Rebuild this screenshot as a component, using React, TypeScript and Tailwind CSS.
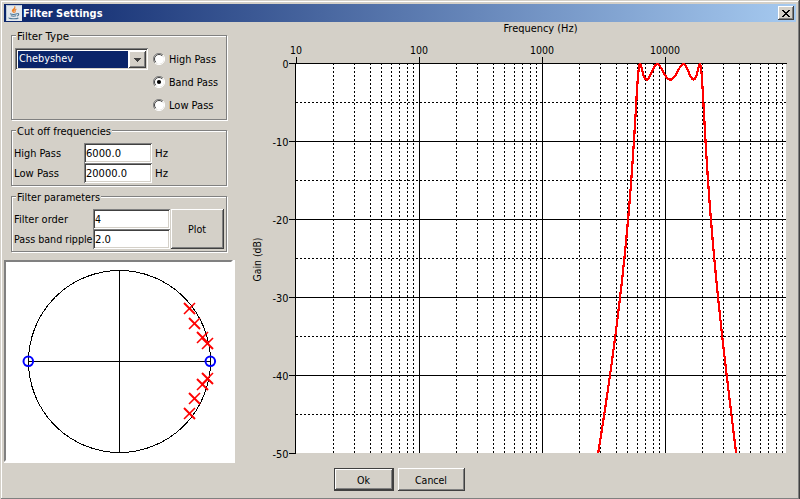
import React from "react";

const ETCHED =
  "relative w-[216px] border border-[#808080] shadow-[1px_1px_0_#fff,inset_1px_1px_0_#fff]";
const SUNKEN =
  "bg-white shadow-[inset_1px_1px_0_#808080,inset_-1px_-1px_0_#fff,inset_2px_2px_0_#404040,inset_-2px_-2px_0_#d4d0c8]";
const RAISED =
  "bg-[#d4d0c8] shadow-[inset_-1px_-1px_0_#404040,inset_1px_1px_0_#fff,inset_-2px_-2px_0_#808080]";

function Group({ title, titleWidth, className, children }: { title: string; titleWidth: number; className: string; children: React.ReactNode }) {
  return (
    <section className={`${ETCHED} ${className}`}>
      <h2
        className="absolute -top-[7px] left-[4px] h-[13px] bg-[#d4d0c8] pl-px leading-[13px]"
        style={{ width: titleWidth }}
      >
        <Label text={title} width={titleWidth - 2} />
      </h2>
      {children}
    </section>
  );
}

function Label({ text, width, bold = false, color = "#000" }: { text: string; width: number; bold?: boolean; color?: string }) {
  return (
    <svg width={width + 1} height="14" className="block shrink-0 overflow-visible">
      <text
        x="0"
        y={bold ? 11 : 10.5}
        fill={color}
        fontSize={11}
        fontFamily={bold ? "DejaVu Sans" : undefined}
        fontWeight={bold ? 700 : 400}
        textLength={width}
        lengthAdjust="spacingAndGlyphs"
      >
        {text}
      </text>
    </svg>
  );
}

function Radio({ label, width, checked = false }: { label: string; width: number; checked?: boolean }) {
  return (
    <label className="flex h-[23px] items-center gap-[4px]">
      <svg width="12" height="12" viewBox="0 0 12 12">
        <circle cx="6" cy="6" r="5" fill="#fff" />
        <path d="M2 10A5.5 5.5 0 0 1 10 2" fill="none" stroke="#808080" />
        <path d="M2.8 9.2A4.5 4.5 0 0 1 9.2 2.8" fill="none" stroke="#404040" />
        <path d="M10 2A5.5 5.5 0 0 1 2 10" fill="none" stroke="#fff" />
        {checked && <circle cx="6" cy="6" r="2.1" fill="#000" />}
      </svg>
      <Label text={label} width={width} />
    </label>
  );
}

function Field({ value, width, className }: { value: string; width: number; className: string }) {
  return (
    <div className={`flex h-[20px] items-center pl-[2px] ${SUNKEN} ${className}`}>
      <Label text={value} width={width} />
    </div>
  );
}

const MINOR = [37, 58, 74, 85, 95, 103, 111, 117];
const DECADES = [296, 419, 542, 665];

/* Fourth order Chebyshev band pass, 6 kHz to 20 kHz at a 192 kHz sample rate. */
function responsePoints() {
  const warp = (f: number) => Math.tan((Math.PI * f) / 192000);
  const lo = warp(6000);
  const hi = warp(20000);
  const pts: string[] = [];
  for (let x = 597; x <= 740; x += 0.5) {
    const w = warp(1000 * Math.pow(10, (x - 542) / 123));
    const u = (w * w - lo * hi) / ((hi - lo) * w);
    const t = 8 * u ** 4 - 8 * u ** 2 + 1;
    const gain = -10 * Math.log10(1 + (Math.pow(10, 0.2) - 1) * t * t);
    pts.push(`${x},${(64 - gain * 7.8).toFixed(2)}`);
  }
  return pts.join(" ");
}

function Chart() {
  return (
    <svg width="555" height="440" viewBox="240 22 555 440" className="block">
      <defs>
        <clipPath id="plot">
          <rect x="295" y="63" width="491" height="390" />
        </clipPath>
      </defs>
      <rect x="295" y="63" width="491" height="390" fill="#fff" />
      <g stroke="#000" strokeWidth="1" shapeRendering="crispEdges">
        {DECADES.map((d) =>
          MINOR.map((m) => (
            <line key={d + m} x1={d + m + 0.5} x2={d + m + 0.5} y1="64" y2="453" strokeDasharray="2 2" strokeDashoffset="1" />
          )),
        )}
        {[102, 180, 258, 336, 414].map((y) => (
          <line key={y} x1="296" x2="786" y1={y + 0.5} y2={y + 0.5} strokeDasharray="2 2" />
        ))}
        {[63, 141, 219, 297, 375].map((y) => (
          <line key={y} x1="289" x2={y === 63 ? 787 : 786} y1={y + 0.5} y2={y + 0.5} />
        ))}
        <line x1="289" x2="296" y1="453.5" y2="453.5" />
        <line x1="295.5" x2="295.5" y1="63" y2="454" />
        <line x1="296.5" x2="296.5" y1="57" y2="63" />
        {[419, 542, 665].map((x) => (
          <line key={x} x1={x + 0.5} x2={x + 0.5} y1="57" y2="453" />
        ))}
      </g>
      <polyline points={responsePoints()} fill="none" stroke="#f00" strokeWidth="2.2" clipPath="url(#plot)" shapeRendering="crispEdges" />
      <g fontSize="11" fill="#000">
        <text x="503.5" y="32" textLength="74" lengthAdjust="spacingAndGlyphs">Frequency (Hz)</text>
        <text x="290" y="54" textLength="12" lengthAdjust="spacingAndGlyphs">10</text>
        <text x="410" y="54" textLength="18" lengthAdjust="spacingAndGlyphs">100</text>
        <text x="530" y="54" textLength="24" lengthAdjust="spacingAndGlyphs">1000</text>
        <text x="650" y="54" textLength="30" lengthAdjust="spacingAndGlyphs">10000</text>
        <text x="282.5" y="68" textLength="6" lengthAdjust="spacingAndGlyphs">0</text>
        {[10, 20, 30, 40, 50].map((v) => (
          <text key={v} x="272.5" y={68 + v * 7.8} textLength="16" lengthAdjust="spacingAndGlyphs">{`-${v}`}</text>
        ))}
        <text transform="translate(261 281.5) rotate(-90)" textLength="44" lengthAdjust="spacingAndGlyphs">Gain (dB)</text>
      </g>
    </svg>
  );
}

const POLES = [
  [189, 308], [194, 323], [202, 337], [207, 343],
  [207, 378], [202, 384], [194, 398], [189, 413],
];

function PoleZeroPlot() {
  return (
    <svg width="231" height="203" viewBox="4 260 231 203" className="block bg-white">
      <path d="M4 260H233L231 262H6V460L4 462Z" fill="#808080" />
      <g fill="none" shapeRendering="crispEdges">
        <circle cx="119.5" cy="361.5" r="91" stroke="#000" />
        <path d="M119.5 271V452M28 361.5H211M28.5 359V364M210.5 359V364" stroke="#000" />
      </g>
      <g fill="none" stroke="#00f" strokeWidth="2">
        <circle cx="28.3" cy="361.3" r="4.8" />
        <circle cx="210.3" cy="361.3" r="4.8" />
      </g>
      <g fill="none" stroke="#f00">
        {POLES.map(([x, y]) => (
          <g key={`${x}-${y}`}>
            <path d={`M${x - 5} ${y - 5}l11 11`} strokeWidth="2" />
            <path d={`M${x - 5} ${y + 6}l11 -11`} strokeWidth="1.6" />
          </g>
        ))}
      </g>
    </svg>
  );
}

function JavaIcon() {
  return (
    <svg width="16" height="16" viewBox="0 0 16 16">
      <rect width="16" height="16" fill="#e4e8ed" />
      <path d="M.5 15.5V.5H15.5" fill="none" stroke="#b8c8d8" />
      <path d="M8.8 1.2C9.4 3.2 5.6 4 6.2 6.2L7.6 8C6.8 5.4 10.2 4.2 8.8 1.2ZM10.4 4C8.6 4.8 8.2 5.6 9 6.8L8.4 8C10.2 6.8 8.4 5.8 10.4 4Z" fill="#ee7a1a" stroke="#ee7a1a" strokeWidth=".5" />
      <path d="M4 8.8C6 9.6 9 9.5 11 8.8M4.8 10.8C6.6 11.4 8.6 11.3 10.2 10.8M11.2 8.6C13.4 8.2 13 10.5 11 11M3.2 12.6C1.8 13.8 11 14.4 12.4 12.8" fill="none" stroke="#4d7896" strokeWidth="1.1" />
    </svg>
  );
}

export default function App() {
  return (
    <div className="h-[499px] w-[800px] overflow-hidden text-black [font-family:'DejaVu_Sans_Condensed','DejaVu_Sans',sans-serif] text-[11px]">
      <div className="flex h-[500px] flex-col bg-[#d4d0c8] px-[4px] pt-[4px] shadow-[inset_-1px_-1px_0_#404040,inset_1px_1px_0_#d4d0c8,inset_-2px_-2px_0_#808080,inset_2px_2px_0_#fff]">
        <header className="flex h-[18px] shrink-0 items-center bg-linear-to-r/srgb from-[#0a246a] to-[#a6caf0] pr-[2px] pl-[2px]">
          <JavaIcon />
          <h1 className="ml-px">
            <Label text="Filter Settings" width={79.5} bold color="#fff" />
          </h1>
          <button className={`ml-auto flex h-[14px] w-[16px] items-center justify-center ${RAISED}`}>
            <svg width="8" height="7" viewBox="0 0 8 7" shapeRendering="crispEdges">
              <path d="M0 0h2v1h1v1h2V1h1V0h2v1H7v1H6v1H5v1h1v1h1v1h1v1H6V6H5V5H3v1H2v1H0V6h1V5h1V4h1V3H2V2H1V1H0Z" />
            </svg>
          </button>
        </header>

        <div className="flex">
          <aside className="w-[236px] shrink-0">
            <div className="flex flex-col pt-[13px] pl-[7px]">
              <Group title="Filter Type" titleWidth={54} className="flex h-[85px]">
                <div className={`mt-[12px] ml-[3px] flex h-[22px] w-[133px] p-[3px] pr-[2px] pb-[2px] ${SUNKEN}`}>
                  <div className="flex w-[110px] items-start bg-[#0a246a] pl-px">
                    <Label text="Chebyshev" width={54} color="#fff" />
                  </div>
                  <div className={`ml-px flex w-[17px] items-center justify-center ${RAISED}`}>
                    <svg width="7" height="4" viewBox="0 0 7 4" shapeRendering="crispEdges">
                      <path d="M0 0H7V1H6V2H5V3H4V4H3V3H2V2H1V1H0Z" fill="#404040" />
                    </svg>
                  </div>
                </div>
                <div className="mt-[11px] ml-[5px]">
                  <Radio label="High Pass" width={47} />
                  <Radio label="Band Pass" width={49} checked />
                  <Radio label="Low Pass" width={44.5} />
                </div>
              </Group>
              <Group title="Cut off frequencies" titleWidth={96} className="mt-[10px] h-[56px] pt-[12px] pl-[2px]">
                <div className="flex h-[20px] items-center">
                  <div className="w-[70px]"><Label text="High Pass" width={47} /></div>
                  <Field value="6000.0" width={35} className="mr-[3px] w-[68px]" />
                  <Label text="Hz" width={13} />
                </div>
                <div className="flex h-[20px] items-center">
                  <div className="w-[70px]"><Label text="Low Pass" width={45} /></div>
                  <Field value="20000.0" width={41} className="mr-[3px] w-[68px]" />
                  <Label text="Hz" width={13} />
                </div>
              </Group>
              <Group title="Filter parameters" titleWidth={85} className="mt-[10px] flex h-[56px] pt-[12px] pl-[2px]">
                <div>
                  <div className="flex h-[20px] items-center">
                    <div className="w-[79px]"><Label text="Filter order" width={54} /></div>
                    <Field value="4" width={6} className="w-[77px]" />
                  </div>
                  <div className="flex h-[20px] items-center">
                    <div className="w-[79px]"><Label text="Pass band ripple" width={78.5} /></div>
                    <Field value="2.0" width={16} className="w-[77px]" />
                  </div>
                </div>
                <button className={`ml-px flex h-[40px] w-[53px] items-center justify-center ${RAISED}`}>
                  <Label text="Plot" width={18} />
                </button>
              </Group>
            </div>
            <div className="pt-[8px]">
              <PoleZeroPlot />
            </div>
          </aside>
          <Chart />
        </div>

        <footer className="-mt-px flex gap-[4px] pt-[6px] pl-[330px]">
          <button className="h-[23px] w-[60px] bg-[#404040] p-px">
            <span className={`flex h-full items-center justify-center ${RAISED}`}>
              <Label text="Ok" width={13} />
            </span>
          </button>
          <button className={`flex h-[23px] w-[67px] items-center justify-center ${RAISED}`}>
            <Label text="Cancel" width={32} />
          </button>
        </footer>
      </div>
    </div>
  );
}
